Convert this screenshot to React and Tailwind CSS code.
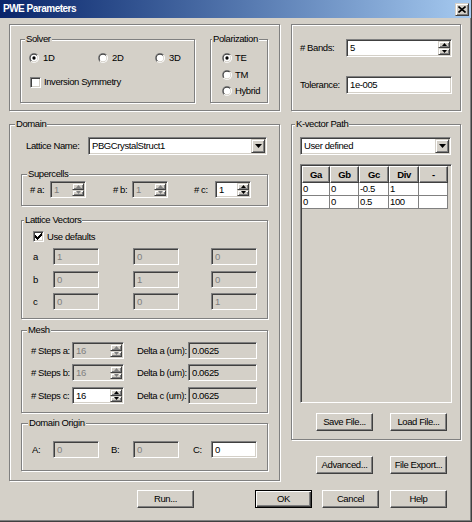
import React from "react";

const raisedSm =
  "border border-t-[#d4d0c8] border-l-[#d4d0c8] border-r-[#404040] border-b-[#404040] shadow-[inset_1px_1px_0_#fff,inset_-1px_-1px_0_#808080]";
const sunken =
  "border border-t-[#808080] border-l-[#808080] border-r-white border-b-white shadow-[inset_1px_1px_0_#404040,inset_-1px_-1px_0_#d4d0c8]";
const etched =
  "border border-[#808080] shadow-[inset_1px_1px_0_#fff,1px_1px_0_#fff]";
const btn =
  "border border-t-white border-l-white border-r-[#404040] border-b-[#404040] shadow-[inset_-1px_-1px_0_#808080]";
const btnDefault =
  "border border-black shadow-[inset_1px_1px_0_#fff,inset_-1px_-1px_0_#404040,inset_-2px_-2px_0_#808080]";

function Radio({ checked }) {
  return (
    <svg width="10" height="10" viewBox="0 0 12 12" className="shrink-0">
      <defs>
        <linearGradient id="rgo" x1="0" y1="0" x2="1" y2="1">
          <stop offset="0.5" stopColor="#808080" />
          <stop offset="0.5" stopColor="#ffffff" />
        </linearGradient>
        <linearGradient id="rgi" x1="0" y1="0" x2="1" y2="1">
          <stop offset="0.5" stopColor="#404040" />
          <stop offset="0.5" stopColor="#d4d0c8" />
        </linearGradient>
      </defs>
      <circle cx="6" cy="6" r="6" fill="url(#rgo)" />
      <circle cx="6" cy="6" r="5" fill="url(#rgi)" />
      <circle cx="6" cy="6" r="4" fill="#fff" />
      {checked && <circle cx="6" cy="6" r="2" fill="#000" />}
    </svg>
  );
}

function Check({ checked, className = "" }) {
  const starts = [2, 3, 4, 3, 2, 1, 0];
  return (
    <div className={`${sunken} w-[11px] h-[11px] bg-white shrink-0 ${className}`}>
      {checked && (
        <svg width="9" height="9" viewBox="0 0 9 9" className="block">
          <path
            d={starts.map((s, i) => `M${1 + i} ${1 + s}h1v3h-1z`).join("")}
            fill="#000"
          />
        </svg>
      )}
    </div>
  );
}

function TriDown({ color = "#000", w = 7, h = 4 }) {
  return (
    <svg width={w} height={h} viewBox={`0 0 ${w} ${h}`} className="block">
      <path d={`M0 0H${w}L${w / 2} ${h}Z`} fill={color} />
    </svg>
  );
}
function TriUp({ color = "#000", w = 5, h = 3 }) {
  return (
    <svg width={w} height={h} viewBox={`0 0 ${w} ${h}`} className="block">
      <path d={`M${w / 2} 0L${w} ${h}H0Z`} fill={color} />
    </svg>
  );
}

function Group({ label, labelPos, className = "", children }) {
  return (
    <div className={`relative ${etched} ${className}`}>
      {label && (
        <span
          className={`absolute top-[-7px] ${labelPos} bg-[#d4d0c8] px-[1px] leading-[12px] whitespace-nowrap`}
        >
          {label}
        </span>
      )}
      {children}
    </div>
  );
}

function Edit({ value, enabled, dark, className = "" }) {
  return (
    <div
      className={`${sunken} flex items-center pl-[3px] ${
        enabled ? "bg-white text-black" : dark ? "bg-[#d4d0c8] text-black" : "bg-[#d4d0c8] text-[#808080]"
      } ${className}`}
    >
      {value}
    </div>
  );
}

function Spin({ value, enabled, className = "" }) {
  const c = enabled ? "#000" : "#808080";
  return (
    <div
      className={`${sunken} flex ${
        enabled ? "bg-white text-black" : "bg-[#d4d0c8] text-[#808080]"
      } ${className}`}
    >
      <div className="flex-1 flex items-center pl-[3px]">{value}</div>
      <div className="flex flex-col w-[13px] py-[1px] pr-[1px]">
        <div className={`${raisedSm} bg-[#d4d0c8] flex-1 flex items-center justify-center`}>
          <TriUp color={c} />
        </div>
        <div className={`${raisedSm} bg-[#d4d0c8] flex-1 flex items-center justify-center`}>
          <TriDown color={c} w={5} h={3} />
        </div>
      </div>
    </div>
  );
}

function Combo({ value, className = "" }) {
  return (
    <div className={`${sunken} h-[18px] bg-white flex ${className}`}>
      <div className="flex-1 flex items-center pl-[3px]">{value}</div>
      <div className="flex py-[1px] pr-[1px]">
        <div className={`${raisedSm} bg-[#d4d0c8] w-[14px] flex items-center justify-center`}>
          <TriDown />
        </div>
      </div>
    </div>
  );
}

function Btn({ children, className = "", def }) {
  return (
    <div
      className={`${def ? btnDefault : btn} w-[57px] h-[18px] flex items-center justify-center shrink-0 ${className}`}
    >
      {children}
    </div>
  );
}

const cols = [
  { n: "Ga", w: "w-[28px]" },
  { n: "Gb", w: "w-[29px]" },
  { n: "Gc", w: "w-[30px]" },
  { n: "Div", w: "w-[30px]" },
  { n: "-", w: "w-[29px]" },
];
const rows = [
  ["0", "0", "-0.5", "1", ""],
  ["0", "0", "0.5", "100", ""],
];

export default function App() {
  return (
    <div className="w-[472px] h-[522px] bg-[#d4d0c8] flex flex-col border-r border-b border-[#404040] shadow-[inset_-1px_-1px_0_#808080] overflow-hidden whitespace-nowrap text-black text-[9.5px] leading-[12px] tracking-[-0.4px] font-['Liberation_Sans',Arial,sans-serif]">
      {/* Title bar */}
      <div className="h-[18px] shrink-0 flex items-center justify-between pl-[3px] pr-[2px] bg-linear-to-r from-[#0a246a] to-[#a6caf0]">
        <span className="text-white font-bold text-[10px] tracking-[-0.5px]">PWE Parameters</span>
        <div className={`${raisedSm} bg-[#d4d0c8] w-[14px] h-[13px] flex items-center justify-center`}>
          <svg width="8" height="7" viewBox="0 0 8 7" className="block">
            <path d="M0.5 0.5L7.5 6.5M7.5 0.5L0.5 6.5" stroke="#000" strokeWidth="1.6" />
          </svg>
        </div>
      </div>

      <div className="flex flex-col pl-[9px] pt-[6px]">
        {/* Top row */}
        <div className="flex h-[87px]">
          <div className={`${etched} w-[271px] h-[87px] flex pt-[14px] pl-[10px]`}>
            <Group label="Solver" labelPos="left-[4px]" className="w-[175px] h-[64px] pt-[13px] pl-[8px]">
              <div className="flex items-center h-[10px]">
                <div className="w-[69px] flex items-center">
                  <Radio checked />
                  <span className="ml-[4px]">1D</span>
                </div>
                <div className="w-[57px] flex items-center">
                  <Radio />
                  <span className="ml-[4px]">2D</span>
                </div>
                <div className="flex items-center">
                  <Radio />
                  <span className="ml-[4px]">3D</span>
                </div>
              </div>
              <div className="flex items-center mt-[13px] ml-[1px]">
                <Check />
                <span className="ml-[3px]">Inversion Symmetry</span>
              </div>
            </Group>
            <Group label="Polarization" labelPos="left-[1px]" className="ml-[15px] w-[58px] h-[64px] pt-[13px] pl-[11px]">
              <div className="flex items-center h-[10px]">
                <Radio checked />
                <span className="ml-[3px]">TE</span>
              </div>
              <div className="flex items-center h-[10px] mt-[7px]">
                <Radio />
                <span className="ml-[3px]">TM</span>
              </div>
              <div className="flex items-center h-[10px] mt-[6px]">
                <Radio />
                <span className="ml-[3px]">Hybrid</span>
              </div>
            </Group>
          </div>

          <div className={`${etched} ml-[11px] w-[170px] h-[87px] flex flex-col pt-[14px] pl-[8px]`}>
            <div className="flex items-center">
              <span className="w-[46px]"># Bands:</span>
              <Spin value="5" enabled className="w-[106px] h-[18px]" />
            </div>
            <div className="flex items-center mt-[19px]">
              <span className="w-[46px]">Tolerance:</span>
              <Edit value="1e-005" enabled className="w-[106px] h-[18px]" />
            </div>
          </div>
        </div>

        {/* Middle row */}
        <div className="flex mt-[13px]">
          <Group label="Domain" labelPos="left-[5px]" className="w-[271px] h-[357px] flex flex-col pt-[12px] pl-[11px]">
            <div className="flex items-center h-[18px]">
              <span className="ml-[5px] w-[62px]">Lattice Name:</span>
              <Combo value="PBGCrystalStruct1" className="w-[179px]" />
            </div>

            <Group label="Supercells" labelPos="left-[5px]" className="mt-[19px] w-[247px] h-[32px] flex items-start pt-[6px] pl-[8px]">
              <div className="flex items-center">
                <span className="w-[20px]"># a:</span>
                <Spin value="1" className="w-[36px] h-[17px]" />
                <span className="ml-[27px] w-[19px]"># b:</span>
                <Spin value="1" className="w-[36px] h-[17px]" />
                <span className="ml-[26px] w-[21px]"># c:</span>
                <Spin value="1" enabled className="w-[36px] h-[17px]" />
              </div>
            </Group>

            <Group label="Lattice Vectors" labelPos="left-[2px]" className="mt-[14px] w-[247px] h-[99px] flex flex-col pt-[10px] pl-[11px]">
              <div className="flex items-center h-[11px]">
                <Check checked />
                <span className="ml-[3px]">Use defaults</span>
              </div>
              {[
                ["a", "1", "0", "0", "mt-[6px]"],
                ["b", "0", "1", "0", "mt-[6px]"],
                ["c", "0", "0", "1", "mt-[5px]"],
              ].map(([l, x, y, z, mt]) => (
                <div key={l} className={`flex items-center ${mt}`}>
                  <span className="w-[20px]">{l}</span>
                  <Edit value={x} className="w-[46px] h-[17px]" />
                  <Edit value={y} className="ml-[34px] w-[46px] h-[17px]" />
                  <Edit value={z} className="ml-[32px] w-[46px] h-[17px]" />
                </div>
              ))}
            </Group>

            <Group label="Mesh" labelPos="left-[5px]" className="mt-[11px] w-[247px] h-[83px] flex flex-col pt-[11px] pl-[9px]">
              {[
                ["a", false, "mt-0"],
                ["b", false, "mt-[5px]"],
                ["c", true, "mt-[6px]"],
              ].map(([l, en, mt]) => (
                <div key={l} className={`flex items-center ${mt}`}>
                  <span className="w-[41px]"># Steps {l}:</span>
                  <Spin value="16" enabled={en} className="w-[52px] h-[17px]" />
                  <span className="ml-[13px] w-[51px]">Delta {l} (um):</span>
                  <Edit value="0.0625" dark className="w-[69px] h-[17px]" />
                </div>
              ))}
            </Group>

            <Group label="Domain Origin" labelPos="left-[6px]" className="mt-[10px] w-[247px] h-[48px] flex items-start pt-[17px] pl-[10px]">
              <div className="flex items-center">
                <span className="w-[21px]">A:</span>
                <Edit value="0" className="w-[46px] h-[17px]" />
                <span className="ml-[12px] w-[22px]">B:</span>
                <Edit value="0" className="w-[46px] h-[17px]" />
                <span className="ml-[14px] w-[18px]">C:</span>
                <Edit value="0" enabled className="w-[46px] h-[17px]" />
              </div>
            </Group>
          </Group>

          <div className="ml-[11px] w-[170px] flex flex-col">
            <Group label="K-vector Path" labelPos="left-[3px]" className="w-[170px] h-[316px] flex flex-col pt-[12px] pl-[8px]">
              <Combo value="User defined" className="w-[151px]" />
              <div className={`${sunken} mt-[9px] w-[152px] h-[239px] bg-[#d4d0c8] p-[1px]`}>
                <div className="flex">
                  {cols.map((c) => (
                    <div key={c.n} className={`${btn} ${c.w} h-[17px] flex items-center justify-center font-bold`}>
                      {c.n}
                    </div>
                  ))}
                </div>
                {rows.map((r, i) => (
                  <div key={i} className="flex">
                    {r.map((v, j) => (
                      <div
                        key={j}
                        className={`${cols[j].w} h-[13px] bg-white border-r border-b border-[#808080] pl-[1px] flex items-center`}
                      >
                        {v}
                      </div>
                    ))}
                  </div>
                ))}
              </div>
              <div className="flex mt-[10px]">
                <Btn className="ml-[16px]">Save File...</Btn>
                <Btn className="ml-[17px]">Load File...</Btn>
              </div>
            </Group>
            <div className="flex mt-[16px]">
              <Btn className="ml-[25px]">Advanced...</Btn>
              <Btn className="ml-[17px]">File Export...</Btn>
            </div>
          </div>
        </div>

        {/* Bottom buttons */}
        <div className="flex mt-[9px]">
          <Btn className="ml-[128px]">Run...</Btn>
          <Btn className="ml-[61px]" def>
            OK
          </Btn>
          <Btn className="ml-[10px]">Cancel</Btn>
          <Btn className="ml-[11px]">Help</Btn>
        </div>
      </div>
    </div>
  );
}
